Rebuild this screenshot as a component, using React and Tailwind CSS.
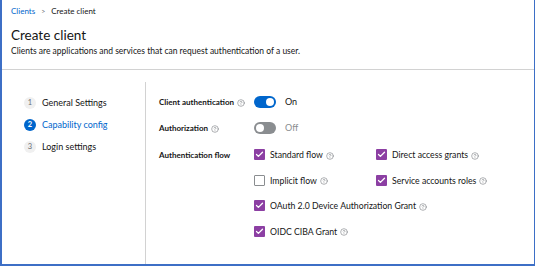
import { CircleHelp, Check } from 'lucide-react';

const font = { fontFamily: 'Lato, "Liberation Sans", sans-serif' };

function Help() {
  return <CircleHelp size={8} strokeWidth={1.6} className="ml-[3px] mt-[2px] text-[#6a6e73] shrink-0" />;
}

function Toggle({ on }) {
  return (
    <div className={`relative w-[22px] h-[12px] rounded-full ${on ? 'bg-[#0066cc]' : 'bg-[#8a8d90]'}`}>
      <div className={`absolute top-[2px] w-[8px] h-[8px] rounded-full bg-white ${on ? 'left-[12px]' : 'left-[2px]'}`} />
    </div>
  );
}

function Box({ checked, label }) {
  return (
    <div className="flex items-center h-[25.5px]">
      {checked ? (
        <div className="w-[11px] h-[11px] rounded-[1px] bg-[#8c3fa3] flex items-center justify-center">
          <Check size={9} strokeWidth={3.5} className="text-white" />
        </div>
      ) : (
        <div className="w-[11px] h-[11px] rounded-[1px] border border-[#8a8d90] bg-white" />
      )}
      <span className="ml-[5px] text-[8.7px] text-[#151515]">{label}</span>
      <Help />
    </div>
  );
}

const steps = [
  { n: 1, label: 'General Settings' },
  { n: 2, label: 'Capability config', current: true },
  { n: 3, label: 'Login settings' },
];

export default function App() {
  return (
    <div style={font} className="w-[535px] h-[266px] bg-white border-l-2 border-r border-b-2 border-[#3d6fc6] flex flex-col overflow-hidden">
      {/* header */}
      <div className="h-[70px] border-b border-[#d2d2d2] pl-[9px] pt-[5px] shrink-0">
        <div className="flex items-center text-[8px] h-[12px]">
          <span className="text-[#0066cc]">Clients</span>
          <span className="mx-[6px] text-[#6a6e73] text-[7px]">&gt;</span>
          <span className="text-[#151515]">Create client</span>
        </div>
        <h1 className="mt-[10px] text-[13.5px] leading-[16px] text-[#151515]">Create client</h1>
        <p className="mt-[2px] text-[8.5px] leading-[12px] text-[#151515]">Clients are applications and services that can request authentication of a user.</p>
      </div>

      {/* body */}
      <div className="flex flex-1 pt-[12px]">
        <div className="w-[144px] border-r border-[#d2d2d2] pl-[22px] pt-[10px] shrink-0">
          {steps.map(s => (
            <div key={s.n} className="flex items-center h-[22px]">
              <div className={`w-[12px] h-[12px] rounded-full flex items-center justify-center text-[7.5px] ${s.current ? 'bg-[#0066cc] text-white font-bold' : 'bg-[#f0f0f0] text-[#6a6e73]'}`}>
                {s.n}
              </div>
              <span className={`ml-[6px] text-[9px] ${s.current ? 'text-[#0066cc]' : 'text-[#151515]'}`}>{s.label}</span>
            </div>
          ))}
        </div>

        <div className="flex-1 pl-[13px] pt-[14px]">
          <div className="flex items-center h-[12px]">
            <div className="w-[95px] flex items-center text-[8px] font-bold text-[#151515]">Client authentication<Help /></div>
            <Toggle on />
            <span className="ml-[9px] text-[9px] text-[#151515]">On</span>
          </div>
          <div className="flex items-center h-[12px] mt-[14px]">
            <div className="w-[95px] flex items-center text-[8px] font-bold text-[#151515]">Authorization<Help /></div>
            <Toggle />
            <span className="ml-[9px] text-[9px] text-[#8a8d90]">Off</span>
          </div>
          <div className="flex mt-[8px]">
            <div className="w-[95px] h-[25.5px] flex items-center text-[8px] font-bold text-[#151515]">Authentication flow</div>
            <div className="grid grid-cols-[122px_auto]">
              <Box checked label="Standard flow" />
              <Box checked label="Direct access grants" />
              <Box label="Implicit flow" />
              <Box checked label="Service accounts roles" />
              <div className="col-span-2"><Box checked label="OAuth 2.0 Device Authorization Grant" /></div>
              <div className="col-span-2"><Box checked label="OIDC CIBA Grant" /></div>
            </div>
          </div>
        </div>
      </div>
    </div>
  );
}
